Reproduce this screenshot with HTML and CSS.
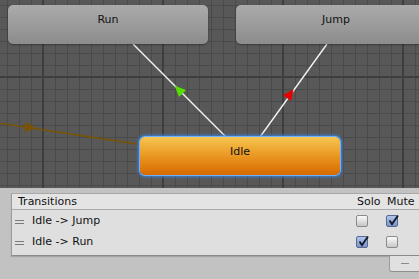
FILE: index.html
```html
<!DOCTYPE html>
<html lang="en">
  <head>
    <meta charset="utf-8" />
    <title>Animator</title>
    <link rel="stylesheet" href="styles.css">
  </head>
  <body>
    <div class="graph">
      <svg class="edges" width="419" height="188" viewBox="0 0 419 188">
        <!-- entry line into Idle -->
        <line x1="-2" y1="123" x2="140" y2="144.5" class="edge-entry" />
        <polygon points="-5,-5 6,0 -5,5" class="arrow-entry" transform="translate(30 127.5) rotate(8.6)" />
        <!-- Idle -> Run -->
        <line x1="133" y1="44" x2="226" y2="137" class="edge" />
        <polygon points="-5,-5 6,0 -5,5" class="arrow-green" transform="translate(179 90) rotate(225)" />
        <!-- Idle -> Jump -->
        <line x1="260" y1="137" x2="327" y2="44" class="edge" />
        <polygon points="-5,-5 6,0 -5,5" class="arrow-red" transform="translate(290 94) rotate(-54.2)" />
      </svg>

      <div class="node run">Run</div>
      <div class="node jump">Jump</div>
      <div class="node idle">Idle</div>
    </div>

    <div class="inspector">
      <div class="list">
        <div class="list-head">
          <span class="col-name">Transitions</span>
          <span class="col">Solo</span>
          <span class="col">Mute</span>
        </div>
        <div class="row">
          <span class="handle"></span>
          <span class="col-name">Idle -&gt; Jump</span>
          <span class="col"><span class="check"></span></span>
          <span class="col"><span class="check on"><svg viewBox="0 0 12 12"><path d="M2.5 5.5 L5 9 L11 0.5" /></svg></span></span>
        </div>
        <div class="row">
          <span class="handle"></span>
          <span class="col-name">Idle -&gt; Run</span>
          <span class="col"><span class="check on"><svg viewBox="0 0 12 12"><path d="M2.5 5.5 L5 9 L11 0.5" /></svg></span></span>
          <span class="col"><span class="check"></span></span>
        </div>
      </div>
      <div class="list-foot">
        <span class="minus"></span>
      </div>
    </div>
  </body>
</html>
```

FILE: styles.css
```css
html,
body {
  margin: 0;
  background: #c2c2c2;
  font-family: "DejaVu Sans", Verdana, sans-serif;
  font-size: 11px;
  color: #111;
}

.graph {
  position: relative;
  width: 419px;
  height: 188px;
  overflow: hidden;
  background-color: #585858;
  background-image:
    linear-gradient(to right, #3e3e3e 2px, transparent 2px),
    linear-gradient(to bottom, #3e3e3e 2px, transparent 2px),
    linear-gradient(to right, #4a4a4a 1px, transparent 1px),
    linear-gradient(to bottom, #4a4a4a 1px, transparent 1px);
  background-size: 120px 120px, 120px 120px, 12px 12px, 12px 12px;
  background-position: 42px 76px, 42px 76px, 7px 5px, 7px 5px;
}

.edges {
  position: absolute;
  left: 0;
  top: 0;
}

.edge {
  stroke: #f2f2f2;
  stroke-width: 1.4;
}

.edge-entry {
  stroke: #7a5300;
  stroke-width: 1.4;
}

.arrow-entry {
  fill: #7a5300;
}

.arrow-green {
  fill: #55e000;
}

.arrow-red {
  fill: #e80000;
}

.node {
  position: absolute;
  width: 200px;
  box-sizing: border-box;
  border-radius: 5px;
  text-align: center;
}

.run,
.jump {
  top: 5px;
  height: 39px;
  padding-top: 8px;
  background: linear-gradient(#ababab, #8c8c8c);
  box-shadow: 0 1px 2px rgba(0, 0, 0, 0.35);
}

.run {
  left: 8px;
}

.jump {
  left: 236px;
}

.idle {
  left: 140px;
  top: 137px;
  height: 38px;
  padding-top: 8px;
  background: linear-gradient(#f6c650, #e8921e 55%, #d86a00);
  box-shadow: 0 0 0 1px #6fb0ff, 0 0 3px 2px #3b7fd6;
}

.inspector {
  padding: 5px 0 0 11px;
}

.list {
  background: #dfdfdf;
  border-left: 1px solid #9c9c9c;
  border-top: 1px solid #a8a8a8;
  border-bottom: 1px solid #8a8a8a;
  box-shadow: 0 1px 1px rgba(0, 0, 0, 0.15);
  padding-bottom: 3px;
}

.list-head {
  display: grid;
  grid-template-columns: 1fr 30px 34px;
  align-items: center;
  height: 15px;
  padding-left: 6px;
  background: #e4e4e4;
  border-bottom: 1px solid #a9a9a9;
}

.list-head .col {
  padding-left: 2px;
}

.row {
  display: grid;
  grid-template-columns: 17px 1fr 30px 34px;
  align-items: center;
  height: 21px;
  padding-left: 3px;
}

.handle {
  width: 9px;
  height: 2px;
  border-top: 1px solid #7a7a7a;
  border-bottom: 1px solid #7a7a7a;
  margin-top: 2px;
}

.col {
  padding-left: 1px;
}

.check {
  display: block;
  position: relative;
  width: 10px;
  height: 10px;
  border: 1px solid #8b8b8b;
  border-radius: 2px;
  background: linear-gradient(#fbfbfb, #c6c6c6);
  margin-top: 1px;
}

.check.on {
  border-color: #56698f;
  background: linear-gradient(#b2c5ee, #7b94cb);
}

.check svg {
  position: absolute;
  left: 0;
  top: -1px;
  width: 12px;
  height: 12px;
  overflow: visible;
}

.check path {
  fill: none;
  stroke: #161c2a;
  stroke-width: 1.9;
}

.list-foot {
  display: flex;
  justify-content: flex-end;
}

.minus {
  display: flex;
  align-items: center;
  justify-content: center;
  width: 29px;
  height: 15px;
  background: #e0e0e0;
  border-left: 1px solid #9c9c9c;
  border-bottom: 1px solid #8f8f8f;
  border-radius: 0 0 0 3px;
}

.minus::before {
  content: "";
  width: 8px;
  height: 1px;
  background: #8a8a8a;
}
```
